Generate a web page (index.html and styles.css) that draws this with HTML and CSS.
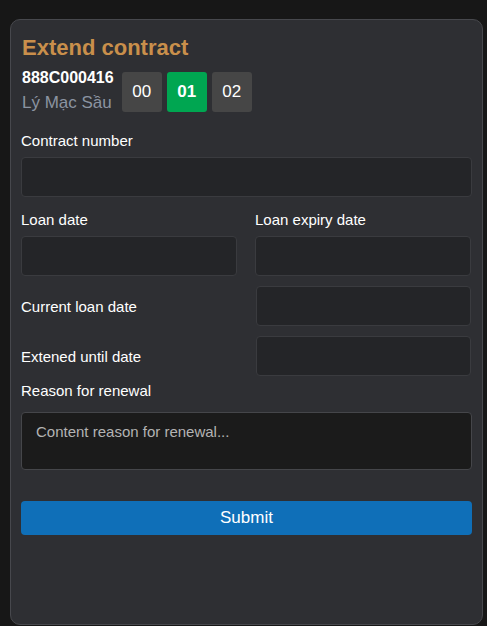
FILE: index.html
```html
<!DOCTYPE html>
<html lang="en">
<head>
<meta charset="utf-8">
<title>Extend contract</title>
<link rel="stylesheet" href="styles.css">
</head>
<body>
<div class="card">
  <h1 class="title">Extend contract</h1>
  <div class="header">
    <div class="who">
      <div class="code">888C000416</div>
      <div class="name">Lý Mạc Sầu</div>
    </div>
    <div class="tabs">
      <div class="tab">00</div>
      <div class="tab active">01</div>
      <div class="tab">02</div>
    </div>
  </div>

  <div class="group first">
    <label class="label">Contract number</label>
    <div class="input"></div>
  </div>

  <div class="grid two">
    <div class="group">
      <label class="label">Loan date</label>
      <div class="input"></div>
    </div>
    <div class="group">
      <label class="label">Loan expiry date</label>
      <div class="input"></div>
    </div>
  </div>

  <div class="grid inline">
    <label class="label">Current loan date</label>
    <div class="input"></div>
  </div>

  <div class="grid inline">
    <label class="label">Extened until date</label>
    <div class="input"></div>
  </div>

  <div class="group reason">
    <label class="label">Reason for renewal</label>
    <div class="textarea">Content reason for renewal...</div>
  </div>

  <button class="submit">Submit</button>
</div>
</body>
</html>
```

FILE: styles.css
```css
* { box-sizing: border-box; }
html, body { margin: 0; padding: 0; }
body {
  background: #171717;
  font-family: "Liberation Sans", Arial, sans-serif;
  color: #ffffff;
  height: 626px;
  overflow: hidden;
}
.card {
  margin: 19px 0 0 10px;
  width: 473px;
  height: 606px;
  background: #2e2f33;
  border: 1px solid #47484d;
  border-radius: 10px;
  padding: 10px 10px;
}
.title {
  margin: 5px 0 0 1px;
  font-size: 22px;
  line-height: 26px;
  font-weight: bold;
  color: #c98f4b;
}
.header {
  display: flex;
  align-items: flex-start;
  gap: 8px;
  margin-top: 11px;
  padding-left: 1px;
}
.who {
  margin-top: -4px;
}
.code {
  font-size: 16px;
  line-height: 20px;
  font-weight: bold;
  color: #ffffff;
}
.name {
  margin-top: 5px;
  font-size: 17px;
  line-height: 20px;
  color: #8b94a1;
}
.tabs {
  display: flex;
  gap: 5px;
}
.tab {
  width: 40px;
  height: 40px;
  border-radius: 3px;
  background: #464646;
  color: #ffffff;
  font-size: 17px;
  display: flex;
  align-items: center;
  justify-content: center;
}
.tab.active {
  background: #00a651;
  font-weight: bold;
}
.label {
  display: block;
  font-size: 15px;
  line-height: 17px;
  color: #ffffff;
}
.group .label { margin-bottom: 8px; }
.group.first { margin-top: 19px; }
.input {
  height: 40px;
  background: #242528;
  border: 1px solid #3a3b3f;
  border-radius: 4px;
}
.grid {
  display: grid;
  grid-template-columns: 216px 216px;
  column-gap: 18px;
}
.grid.two { margin-top: 14px; }
.grid.inline {
  margin-top: 10px;
  align-items: center;
}
.grid.inline .input { margin-left: 1px; }
.group.reason { margin-top: 6px; }
.group.reason .label { margin-bottom: 13px; }
.textarea {
  height: 58px;
  background: #1b1b1b;
  border: 1px solid #45464a;
  border-radius: 4px;
  padding: 10px 14px;
  font-size: 15px;
  line-height: 17px;
  color: #b3b3b3;
}
.submit {
  display: block;
  width: 100%;
  margin-top: 31px;
  height: 34px;
  background: #0f6fb8;
  border: none;
  border-radius: 4px;
  color: #ffffff;
  font-family: "Liberation Sans", Arial, sans-serif;
  font-size: 17px;
  padding: 0;
}
```
